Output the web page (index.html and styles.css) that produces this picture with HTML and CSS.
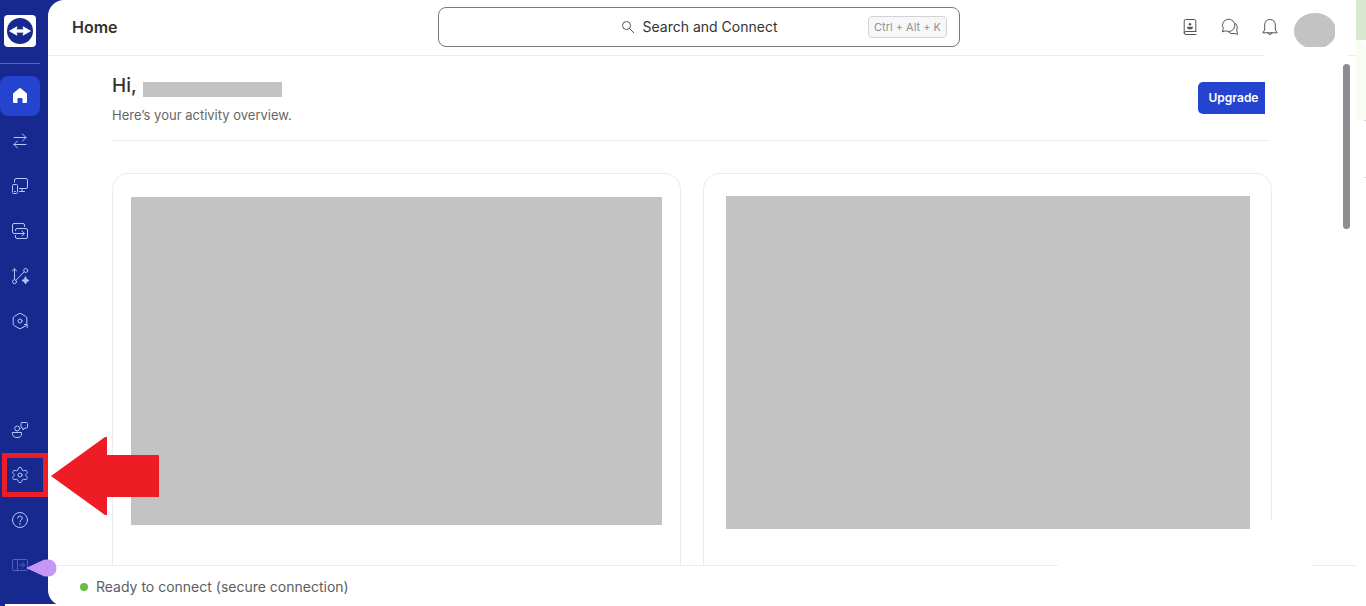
FILE: index.html
```html
<!DOCTYPE html>
<html lang="en">
<head>
  <meta charset="UTF-8" />
  <meta name="viewport" content="width=device-width, initial-scale=1.0" />
  <title>Home</title>
  <link rel="stylesheet" href="styles.css">
</head>
<body>
  <div class="app">
    <aside class="sidebar">
      <div class="logo">
        <svg width="32" height="32" viewBox="0 0 32 32">
          <circle cx="16" cy="16" r="13" fill="#17288f"/>
          <path d="M5.500 16l7.500-4.200-.8 3h7.600l-.8-3 7.500 4.200-7.500 4.200.8-3h-7.600l.8 3z" fill="#fff" stroke="#fff" stroke-width=".8" stroke-linejoin="round"/>
        </svg>
      </div>
      <nav class="nav" aria-label="Main">
        <button class="nav-item active" aria-label="Home">
          <svg width="20" height="20" viewBox="0 0 20 20"><path d="M3 8.200Q3 7.400 3.600 6.900L9 2.400q1-.8 2 0l5.400 4.500q.6.500.6 1.300v7.600q0 1.200-1.200 1.200h-3.300v-4q0-1-1-1h-3q-1 0-1 1v4H4.200q-1.200 0-1.200-1.200z" fill="#fff"/></svg>
        </button>
        <button class="nav-item" aria-label="Remote support">
          <svg class="icon" viewBox="0 0 20 20"><path d="M4 6.500h12M12.500 3l3.500 3.500-3.500 3.500M16 13.500H4M7.500 10L4 13.500 7.500 17"/></svg>
        </button>
        <button class="nav-item" aria-label="Devices">
          <svg class="icon" viewBox="0 0 20 20"><path d="M4.500 6V4Q4.500 2.500 6 2.500h10q1.500 0 1.500 1.500v7q0 1.500-1.500 1.500H9.500M12 12.500v3M9.500 15.500h5"/><rect x="2.500" y="8.500" width="5" height="9" rx="1"/><path d="M4.500 15.500h1"/></svg>
        </button>
        <button class="nav-item" aria-label="Sessions">
          <svg class="icon" viewBox="0 0 20 20"><path d="M5.500 12.500H4Q2.500 12.500 2.500 11V4Q2.500 2.500 4 2.500h9q1.500 0 1.500 1.500v1.500"/><path d="M5.500 9.500V9Q5.500 7.500 7 7.500h9q1.500 0 1.500 1.500v7q0 1.500-1.500 1.500H7q-1.500 0-1.500-1.500v-1.500M5.500 12.500H14M12 10l2.300 2.500L12 15"/></svg>
        </button>
        <button class="nav-item" aria-label="Insights">
          <svg class="icon" viewBox="0 0 20 20"><path d="M4.500 13V3M2.300 5l2.200-2.200L6.700 5M6 14.200l8.300-8.500"/><circle cx="4.500" cy="15.700" r="2"/><circle cx="15.700" cy="4.500" r="2"/><path d="M15.500 11q.5 3 3.500 3.500-3 .5-3.500 3.500-.5-3-3.500-3.500 3-.5 3.500-3.500z" fill="currentColor"/></svg>
        </button>
        <button class="nav-item" aria-label="Remote management">
          <svg class="icon" viewBox="0 0 20 20"><path d="M16.800 12.500V7q0-1-.9-1.500L11 2.600q-1-.6-2 0L4.100 5.500q-.9.500-.9 1.500v6q0 1 .9 1.500L9 17.400q1 .6 2 0l2.200-1.300M13 16.500l4-2.800M14.500 13.500h2.700v3"/><circle cx="10" cy="10" r="2"/></svg>
        </button>
      </nav>
      <nav class="nav nav-bottom" aria-label="Tools">
        <button class="nav-item" aria-label="Feedback">
          <svg class="icon" viewBox="0 0 20 20"><circle cx="7.200" cy="8.500" r="2.500"/><path d="M2.500 12.500h9v1.500q0 3.500-4.500 3.500T2.500 14zM12 2.500h4.500q1 0 1 1V7q0 1-1 1H15l-2 2V8h-1q-1 0-1-1V3.500q0-1 1-1z"/></svg>
        </button>
        <button class="nav-item highlighted" aria-label="Settings">
          <svg class="icon" viewBox="0 0 20 20"><path d="M8.300 3.500Q8.600 2.300 10 2.300t1.700 1.200l.5 1.600 1.200.7 1.700-.4q1.200-.2 1.900.9t-.1 2.100L15.700 9.600v.8l1.200 1.200q.8 1 .1 2.100t-1.900.9l-1.700-.4-1.200.7-.5 1.600q-.3 1.200-1.700 1.200t-1.700-1.200l-.5-1.600-1.200-.7-1.700.4Q3.700 14.800 3 13.700t.1-2.100l1.200-1.200v-.8L3.100 8.400Q2.300 7.400 3 6.300t1.900-.9l1.700.4 1.200-.7z"/><circle cx="10" cy="10" r="2"/></svg>
        </button>
        <button class="nav-item" aria-label="Help">
          <svg class="icon" viewBox="0 0 20 20"><circle cx="10" cy="10" r="7.500"/><path d="M7.700 8.200Q7.700 6 10 6t2.300 2q0 1.200-1.300 2-1 .6-1 1.800M10 13.500v1"/></svg>
        </button>
        <button class="nav-item dim" aria-label="Expand sidebar">
          <svg class="icon" viewBox="0 0 20 20"><rect x="2.500" y="4.500" width="15" height="11" rx="1"/><path d="M7.500 4.500v11M9.500 10h5M12.500 7.800l2.200 2.200-2.200 2.200"/></svg>
        </button>
      </nav>
    </aside>

    <div class="main">
      <header class="header">
        <h1 class="title">Home</h1>
        <button class="search">
          <svg width="14" height="14" viewBox="0 0 14 14" fill="none" stroke="#555" stroke-width="1"><circle cx="5.500" cy="5.500" r="4"/><path d="M8.500 8.500L13 13"/></svg>
          <span>Search and Connect</span>
          <kbd class="shortcut">Ctrl + Alt + K</kbd>
        </button>
        <div class="actions">
          <button class="action" aria-label="Contacts">
            <svg class="icon" viewBox="0 0 20 20"><path d="M16 14.500H6q-1.800 0-1.800 1.500T6 17.500h10M4.200 16V4Q4.200 2.500 5.700 2.500h8.600q1.500 0 1.500 1.500v10.500"/><circle cx="10" cy="7.300" r="1.300" fill="currentColor" stroke="none"/><path d="M7 9.800h6q0 2.700-3 2.700T7 9.800z" fill="currentColor" stroke="none"/></svg>
          </button>
          <button class="action" aria-label="Chat">
            <svg class="icon" viewBox="0 0 20 20"><path d="M2.500 14.500l.8-3A6.200 6.200 0 1 1 6 14zM15.800 6.500q2.700 3 1 6.500l.7 4.300-3.500-.8q-3.500 1-5.500-1.500"/></svg>
          </button>
          <button class="action" aria-label="Notifications">
            <svg class="icon" viewBox="0 0 20 20"><path d="M3 15.500l1.700-2.500V8Q5 2.500 10 2.500T15.300 8v5l1.700 2.500zM8 15.500q0 2 2 2t2-2"/></svg>
          </button>
        </div>
        <svg class="avatar" width="41" height="34" viewBox="0 0 41 34"><ellipse cx="21" cy="18" rx="21" ry="18" fill="#c3c3c3"/></svg>
      </header>

      <main class="content">
        <section class="greeting">
          <div>
            <h2 class="hello">Hi, <span class="name-block"></span></h2>
            <p class="overview">Here’s your activity overview.</p>
          </div>
          <button class="upgrade">Upgrade</button>
        </section>
        <section class="cards">
          <div class="card"><div class="placeholder"></div></div>
          <div class="card card-tall"><div class="placeholder"></div></div>
        </section>
      </main>

      <footer class="status"><span class="dot"></span>Ready to connect (secure connection)</footer>

      <div class="blank blank-top"></div>
      <div class="blank blank-bottom"></div>
      <div class="scrollbar"></div>
    </div>

    <div class="edge">
      <div class="edge-green"></div>
      <div class="edge-pale"></div>
      <div class="edge-tick"></div>
      <div class="edge-tick"></div>
    </div>

    <div class="baseline"></div>
    <svg class="arrow" width="109" height="80" viewBox="0 0 109 80"><path d="M1 40L55 1h2v18h51q1 0 1 1v41H57v18h-2z" fill="#ee1c25"/></svg>
    <svg class="pointer" width="31" height="18" viewBox="0 0 31 18"><path d="M0 9L18 .8Q30-1.500 30.500 9 30 19.500 18 17.200z" fill="#c797f6"/></svg>
  </div>
</body>
</html>
```
FILE: styles.css
```css
:root {
  --navy: #17288f;
  --blue: #2444d0;
  --line: #ebedef;
  --block: #c3c3c3;
}
*, *::after { box-sizing: border-box; }
body {
  margin: 0;
  font-family: Inter, "Liberation Sans", sans-serif;
  font-size: 14px; line-height: 20px;
  color: #333;
}
button {
  font: inherit; color: inherit;
  border: none; background: none;
  padding: 0; cursor: pointer;
}
.app {
  position: relative;
  display: flex;
  height: 100vh; overflow: hidden;
  background: var(--navy);
}
.icon {
  width: 20px; height: 20px;
  fill: none; stroke: currentColor; stroke-width: 1;
  stroke-linecap: round; stroke-linejoin: round;
}

/* sidebar */
.sidebar {
  flex: none; width: 48px;
  padding: 15px 0 21px;
  display: flex; flex-direction: column;
}
.logo {
  width: 32px; height: 32px; margin-left: 4px;
  background: white; border-radius: 4px;
}
.logo svg, .nav svg { display: block; }
.nav {
  width: 40px; margin-top: 16px; padding-top: 12px;
  border-top: 1px solid #5667b8;
  display: flex; flex-direction: column; gap: 5px;
}
.nav-bottom {
  margin-top: auto; padding-top: 0; border-top: none;
}
.nav-item {
  position: relative;
  width: 40px; height: 40px;
  display: flex; align-items: center; justify-content: center;
  border-radius: 8px; color: #b2c6ff;
}
.nav-item.active { background: var(--blue); }
.nav-item.dim { color: #4a62c4; }
.highlighted::after {
  content: "";
  position: absolute; left: 2px; top: -2px;
  width: 46px; height: 44px;
  border: 5px solid #ee1c25;
}

/* main area */
.main {
  position: relative;
  flex: 1; min-width: 0;
  display: flex; flex-direction: column;
  background: white;
  border-radius: 16px 0 0 16px;
}
.header {
  flex: none; height: 56px;
  display: grid; grid-template-columns: 366px minmax(0, 522px) 1fr auto;
  align-items: center;
  padding: 0 21px 2px 24px;
  border-bottom: 1px solid var(--line);
}
.title {
  margin: 0;
  font-size: 16px; font-weight: 600;
}
.search {
  position: relative;
  height: 40px;
  display: flex; align-items: center; justify-content: center; gap: 8px;
  border: 1px solid #77797c; border-radius: 8px;
}
.shortcut {
  position: absolute; right: 12px; top: 8px;
  padding: 0 5px;
  border: 1px solid #d0d3d8; border-radius: 4px;
  background: #f6f7f9; color: #909398;
  font-family: inherit; font-size: 11px;
}
.actions {
  display: flex; justify-content: flex-end; gap: 20px;
  margin-right: 14px;
}
.action {
  width: 20px; height: 20px; color: #555;
}
.action svg { display: block; }
.avatar { margin-top: 6px; }

.content {
  flex: 1; min-height: 0; overflow: hidden;
  padding: 16px 84px 0 64px;
}
.greeting {
  display: flex; justify-content: space-between; align-items: flex-start;
  height: 69px; margin-right: 3px;
  border-bottom: 1px solid var(--line);
}
.hello {
  display: flex; align-items: center; gap: 6px;
  margin: 0;
  font-size: 19px; line-height: 28px; font-weight: 500;
}
.name-block {
  width: 139px; height: 15px; margin-top: 6px;
  background: var(--block);
}
.overview {
  margin: 5px 0 0;
  font-size: 13px; color: #666;
}
.upgrade {
  width: 67px; height: 32px; margin: 10px 4px 0 0;
  padding-left: 4px;
  background: var(--blue); color: white;
  border-radius: 5px 0 0 5px;
  font-size: 12px; font-weight: 600;
}
.cards {
  display: grid; grid-template-columns: 1fr 1fr; gap: 22px;
  margin-top: 32px;
}
.card {
  height: 480px; padding: 23px 18px;
  border: 1px solid var(--line); border-radius: 16px;
}
.card-tall { padding: 22px 21px 22px 22px; }
.placeholder {
  position: relative; z-index: 1;
  height: 328px; background: var(--block);
}
.card-tall .placeholder { height: 333px; }

.status {
  flex: none; height: 41px;
  display: flex; align-items: center; gap: 8px;
  padding: 2px 32px 0;
  border-top: 1px solid var(--line);
  font-size: 14px; color: #5c5e62;
}
.dot {
  width: 8px; height: 8px; border-radius: 50%;
  background: #61bf43;
}

/* blanked out areas and scrollbar */
.blank {
  position: absolute; background: white;
}
.blank-top { right: 9px; top: 50px; width: 82px; height: 8px; }
.blank-bottom { right: 44px; bottom: 0; width: 254px; height: 85px; }
.scrollbar {
  position: absolute; right: 6px; top: 64px;
  width: 7px; height: 165px;
  border-radius: 4px; background: #8b8d90;
}

.edge {
  flex: none; width: 10px;
  background: white;
}
.edge-green { height: 40px; background: #d7e8cf; }
.edge-pale {
  height: 80px; background: #f8fcf2;
  border-radius: 0 8px 0 0;
}
.edge-tick {
  width: 2px; height: 57px; margin-left: auto;
  border-top: 1px solid #d5d5d5;
}

/* white rim under the window */
.baseline {
  position: absolute; left: 5px; right: 0; bottom: 0;
  height: 2px; background: white;
}

/* callouts */
.arrow {
  position: absolute; left: 50px; bottom: 90px; z-index: 2;
}
.pointer {
  position: absolute; left: 26px; bottom: 29px;
}
```
